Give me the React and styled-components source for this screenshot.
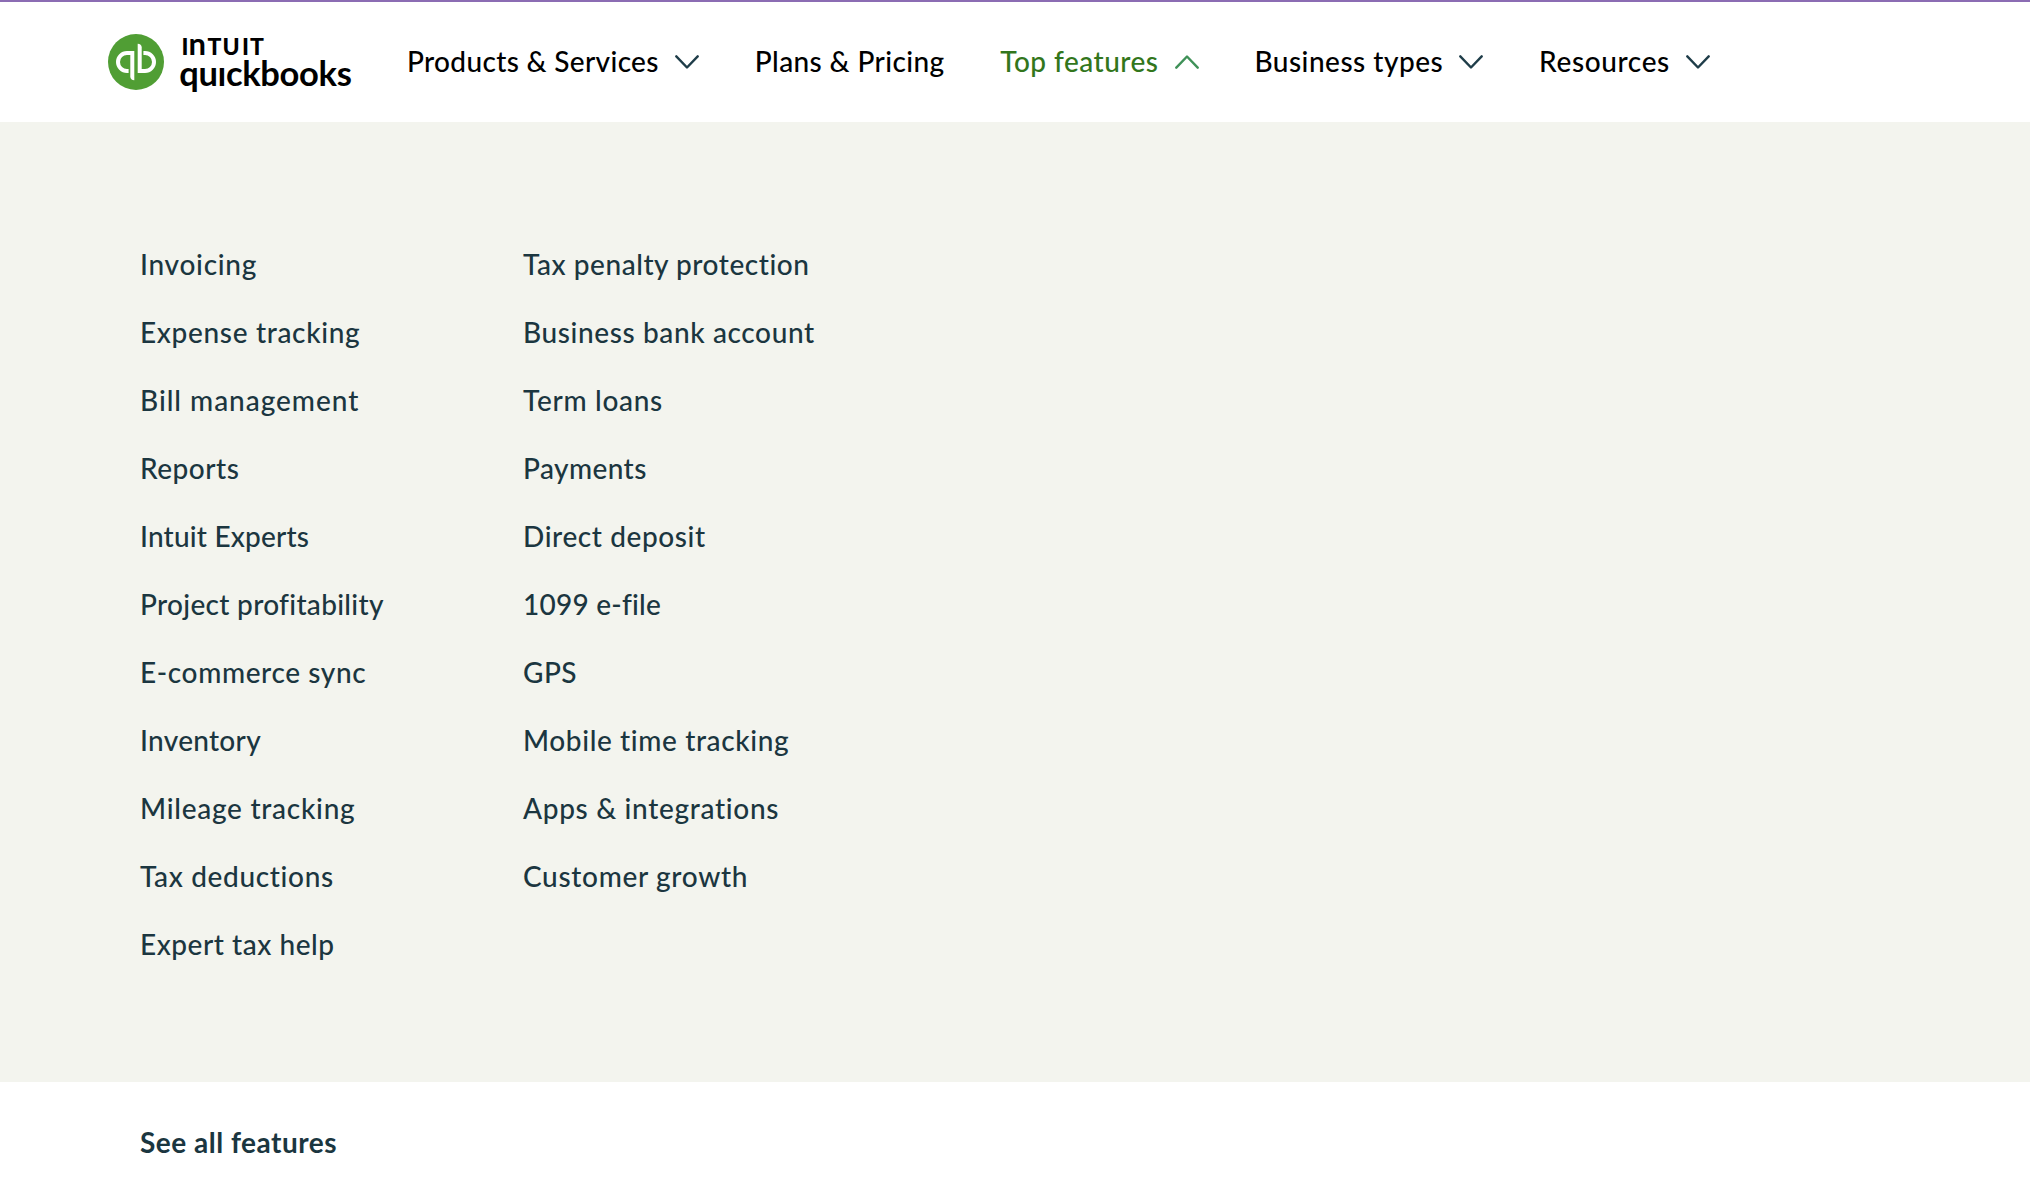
import React from 'react';
import styled, { createGlobalStyle } from 'styled-components';

const GlobalStyle = createGlobalStyle`
  * {
    box-sizing: border-box;
  }

  body {
    margin: 0;
    background: #ffffff;
    font-family: Lato, 'Liberation Sans', sans-serif;
  }
`;

const Page = styled.div`
  display: flex;
  flex-direction: column;
  min-height: 1200px;
`;

const Header = styled.header`
  display: flex;
  align-items: center;
  height: 122px;
  padding-left: 108px;
  border-top: 2px solid #8b6cb3;
`;

const LogoLink = styled.a`
  display: flex;
  width: 299px;
`;

const LogoDrawing = styled.svg`
  width: 246px;
  height: 80px;
`;

const LogoText = styled.text`
  font-family: Lato, 'Liberation Sans', sans-serif;
  font-weight: ${(props) => props.$weight};
  font-size: ${(props) => props.$size}px;
  fill: #000000;
`;

const Nav = styled.nav`
  display: flex;
  align-items: center;
  gap: 55.7px;
`;

const NavItem = styled.a`
  display: flex;
  align-items: center;
  gap: 16.3px;
  color: ${(props) => (props.$active ? '#32761c' : '#000000')};
`;

const NavLabel = styled.span`
  padding-bottom: 2px;
  font-size: 28px;
  font-weight: 500;
  line-height: 28px;
  letter-spacing: ${(props) => props.$tracking}px;
  white-space: nowrap;
`;

const ChevronIcon = styled.svg`
  width: 24px;
  height: 14px;
  fill: none;
  stroke: ${(props) => (props.$active ? '#3f9158' : '#1f3d49')};
  stroke-width: 2.4;
  stroke-linecap: round;
  stroke-linejoin: round;
`;

const Panel = styled.section`
  display: grid;
  grid-template-columns: 383px 383px;
  align-content: start;
  height: 960px;
  padding: 108px 0 0 140px;
  background: #f3f4ee;
`;

const List = styled.ul`
  margin: 0;
  padding: 0;
  list-style: none;
`;

const Feature = styled.li`
  display: flex;
  align-items: center;
  height: 68px;
  color: #1b3640;
  font-size: 28px;
  font-weight: 500;
  letter-spacing: ${(props) => props.$tracking}px;
  white-space: nowrap;
`;

const Footer = styled.footer`
  display: flex;
  align-items: center;
  height: 118px;
  padding: 2px 0 0 140px;
`;

const SeeAll = styled.a`
  color: #1b3640;
  font-size: 28px;
  font-weight: 700;
  line-height: 28px;
  letter-spacing: 0.5px;
`;

const navItems = [
  { label: 'Products & Services', tracking: 0.34, menu: true },
  { label: 'Plans & Pricing', tracking: 0.4 },
  { label: 'Top features', tracking: 0.47, menu: true, active: true },
  { label: 'Business types', tracking: 0.49, menu: true },
  { label: 'Resources', tracking: 0.62, menu: true },
];

const features = [
  [
    { label: 'Invoicing', tracking: 0.74 },
    { label: 'Expense tracking', tracking: 0.67 },
    { label: 'Bill management', tracking: 0.97 },
    { label: 'Reports', tracking: 0.5 },
    { label: 'Intuit Experts', tracking: 0.2 },
    { label: 'Project profitability', tracking: 0.31 },
    { label: 'E-commerce sync', tracking: 0.62 },
    { label: 'Inventory', tracking: 0.3 },
    { label: 'Mileage tracking', tracking: 0.74 },
    { label: 'Tax deductions', tracking: 0.65 },
    { label: 'Expert tax help', tracking: 0.53 },
  ],
  [
    { label: 'Tax penalty protection', tracking: 0.54 },
    { label: 'Business bank account', tracking: 0.62 },
    { label: 'Term loans', tracking: 0.7 },
    { label: 'Payments', tracking: 0.42 },
    { label: 'Direct deposit', tracking: 0.6 },
    { label: '1099 e-file', tracking: 0.23 },
    { label: 'GPS', tracking: 0.5 },
    { label: 'Mobile time tracking', tracking: 0.62 },
    { label: 'Apps & integrations', tracking: 0.68 },
    { label: 'Customer growth', tracking: 0.68 },
  ],
];

function Logo() {
  return (
    <LogoDrawing viewBox="0 -12 246 80">
      <circle cx="28" cy="28" r="28" fill="#509e34" />
      <g fill="none" stroke="#ffffff" strokeWidth="4">
        <path d="M24.3 19H19a9 9 0 0 0 0 18h1.6" />
        <path d="M31.7 37H37a9 9 0 0 0 0-18h-1.6" />
      </g>
      <g fill="#ffffff">
        <path d="M22.3 17h4v29.2c-2.4 0-4-1.4-4-3.8z" />
        <path d="M33.7 39h-4V9.8c2.4 0 4 1.4 4 3.8z" />
      </g>
      <LogoText $size={23} $weight={900} y="20.5">
        <tspan x="73.4">I</tspan>
        <tspan x="80.4" fontSize="31" fontWeight="700">n</tspan>
        <tspan x="99.4">T</tspan>
        <tspan x="114.6">U</tspan>
        <tspan x="133.9">I</tspan>
        <tspan x="142">T</tspan>
      </LogoText>
      <LogoText $size={34.5} $weight={700} x="71.2" y="52.3" textLength="172.6" lengthAdjust="spacing">
        quıckbooks
      </LogoText>
    </LogoDrawing>
  );
}

function Chevron({ active }) {
  return (
    <ChevronIcon viewBox="0 0 24 14" $active={active}>
      <path d={active ? 'M1.3 12.7L12 1.5l10.7 11.2' : 'M1.3 1.3L12 12.5 22.7 1.3'} />
    </ChevronIcon>
  );
}

function App() {
  return (
    <Page>
      <GlobalStyle />
      <Header>
        <LogoLink>
          <Logo />
        </LogoLink>
        <Nav>
          {navItems.map((item) => (
            <NavItem key={item.label} $active={item.active}>
              <NavLabel $tracking={item.tracking}>{item.label}</NavLabel>
              {item.menu && <Chevron active={item.active} />}
            </NavItem>
          ))}
        </Nav>
      </Header>
      <Panel>
        {features.map((column) => (
          <List key={column[0].label}>
            {column.map((feature) => (
              <Feature key={feature.label} $tracking={feature.tracking}>
                {feature.label}
              </Feature>
            ))}
          </List>
        ))}
      </Panel>
      <Footer>
        <SeeAll>See all features</SeeAll>
      </Footer>
    </Page>
  );
}

export default App;
